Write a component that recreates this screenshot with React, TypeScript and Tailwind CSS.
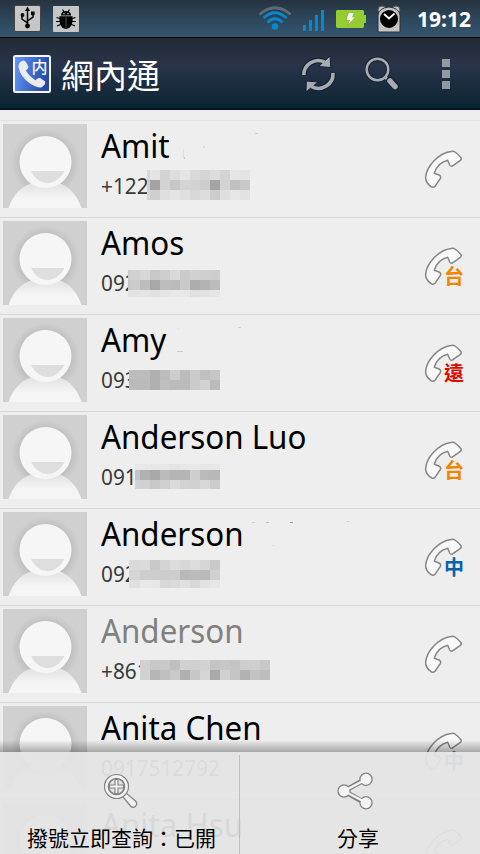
import React from 'react';

type Mosaic = { x: number; y: number; first: number; heights: number[]; cells: string[] };
type Speck = [number, number, number, number, string];
type Contact = {
  name: string;
  phone: string;
  dim?: boolean;
  badge?: string;
  badgeClass?: string;
  mosaic?: Mosaic;
  specks?: Speck[];
};

// Each pair of hex digits in a cell string is the grey of one 10px block.
const contacts: Contact[] = [
  {
    name: 'Amit', phone: '+122',
    mosaic: { x: 147, y: 49, first: 3, heights: [10, 10, 10], cells: ['d8e4d3dde5dad5dcd3e5e4', 'cfa3d3c7d4d3cda4d3c0c9', 'd6cfdfe4e0d7dccddfe6e1'] },
    specks: [[183, 28, 1, 10, '#e2e2e2'], [184, 36, 1, 2, '#ccc'], [203, 25, 2, 2, '#dedede'], [255, 12, 3, 1, '#d0d0d0']],
  },
  {
    name: 'Amos', phone: '092', badge: '台', badgeClass: 'text-[#f08600]',
    mosaic: { x: 128, y: 52, first: 2, heights: [10, 10, 7], cells: ['cdd1d7c8cdd9cbd1cfcd', 'c5cbbda8bdbbc9adb3bb', 'e2e3e5e1e5e8e7e0e2e6'] },
  },
  {
    name: 'Amy', phone: '093', badge: '遠', badgeClass: 'text-[#df0b00]',
    mosaic: { x: 129, y: 55, first: 1, heights: [10, 10], cells: ['bcbcbcb0bccdbccbc0c6', 'bababab0bfbbbbcbd2bb'] },
    specks: [[177, 36, 6, 1, '#ccc'], [238, 12, 3, 1, '#d0d0d0'], [178, 13, 1, 1, '#ddd']],
  },
  {
    name: 'Anderson Luo', phone: '091', badge: '台', badgeClass: 'text-[#f08600]',
    mosaic: { x: 135, y: 52, first: 5, heights: [6, 10, 9], cells: ['e7e8e7e7e4e7e8e6e7', 'c4b2a8bbb5b5cebab8', 'd2d1c8d0dbd3d1d8cc'] },
  },
  {
    name: 'Anderson', phone: '092', badge: '中', badgeClass: 'text-[#0763ae]',
    mosaic: { x: 129, y: 51, first: 1, heights: [10, 10, 8], cells: ['dadadbc9d4dcd8dcd6c9', 'd5d5cdcdcdcdb9bbbad0', 'e0e0e8e7d8dae0d8e2e7'] },
    specks: [[252, 13, 3, 1, '#cfcfcf'], [266, 13, 3, 1, '#c4c4c4'], [290, 13, 3, 1, '#9b9b9b'], [347, 12, 2, 1, '#ccc'], [272, 36, 2, 1, '#ddd']],
  },
  {
    name: 'Anderson', phone: '+861', dim: true,
    mosaic: { x: 140, y: 54, first: 10, heights: [10, 10], cells: ['d1c8c9bfd1d0d2c5c7c4cecfc8', 'd2b6c0c9b0c7d5a9d0c5b2c3bd'] },
  },
  { name: 'Anita Chen', phone: '0917512792', badge: '中', badgeClass: 'text-[#0763ae]' },
  { name: 'Anita Hsu', phone: '' },
];

function Avatar() {
  return (
    <svg width="84" height="84" viewBox="0 0 84 84" className="shrink-0">
      <defs>
        <radialGradient id="avatarShade" cx="0.5" cy="0.5" r="0.5">
          <stop offset="0.76" stopColor="#a8a8a8" stopOpacity="0.4" />
          <stop offset="1" stopColor="#a8a8a8" stopOpacity="0" />
        </radialGradient>
        <linearGradient id="bodyFill" x1="0" y1="0" x2="0" y2="1">
          <stop offset="0" stopColor="#e2e2e2" />
          <stop offset="0.6" stopColor="#f5f5f5" />
        </linearGradient>
      </defs>
      <rect width="84" height="84" fill="#d0d0d0" />
      <circle cx="42.5" cy="39" r="34" fill="url(#avatarShade)" />
      <path d="M5.500 84C10 71 18 62.500 28 59.500H57C66 62.500 74 71 78.500 84Z" fill="url(#bodyFill)" />
      <circle cx="42.500" cy="38" r="26" fill="#f6f6f6" />
      <path d="M28 47H61.500C57 55 51 59 45 59C38 59 32 55 28 47Z" fill="#dedede" />
    </svg>
  );
}

function Handset() {
  return (
    <svg width="40" height="40" viewBox="0 0 40 40">
      <path
        d="M1.700 28C2.500 18 14 4 27 2.400Q29.500 1.900 31 3Q34.500 5.500 37 8.800Q37.800 10.500 36 11.700L28.200 17.200Q26.500 17.500 25.700 16L23.700 11.300C17 13 12 18 10.300 24.300L15 26Q17.500 27.500 16.300 29.500L11 37.300Q9.300 39 7.500 37.800Q2.500 34.500 1.700 30Z"
        fill="#f9f9f9" stroke="#868686" strokeWidth="1.500" strokeLinejoin="round"
      />
    </svg>
  );
}

function MosaicBlock({ m }: { m: Mosaic }) {
  return (
    <div className="absolute" style={{ left: m.x, top: m.y }}>
      {m.cells.map((line, r) => (
        <div key={r} className="flex" style={{ height: m.heights[r] }}>
          {(line.match(/../g) ?? []).map((g, c) => (
            <span key={c} className="h-full" style={{ width: c === 0 ? m.first : 10, background: `#${g}${g}${g}` }} />
          ))}
        </div>
      ))}
    </div>
  );
}

function Row({ c }: { c: Contact }) {
  return (
    <li className="relative flex h-[97px] shrink-0 border-b border-[#d6d6d6] pt-[3px] pl-[3px]">
      <Avatar />
      <div className="ml-[14px] min-w-0 flex-1">
        <div className={`mt-[2px] h-10 origin-left scale-x-[0.949] whitespace-nowrap text-[33px] leading-10 ${c.dim ? 'text-[#808080]' : 'text-black'}`}>{c.name}</div>
        <div className="mt-1 h-[30px] origin-left scale-x-[0.945] whitespace-nowrap text-[22px] leading-[30px] text-[#3a3a3a]">{c.phone}</div>
      </div>
      <div className="relative mt-[25px] mr-4 h-10 w-10 shrink-0">
        <Handset />
        {c.badge && <span className={`absolute top-5 left-5 font-['Noto_Sans_CJK_TC',sans-serif] text-[20px] leading-5 font-bold ${c.badgeClass}`}>{c.badge}</span>}
      </div>
      {c.mosaic && <MosaicBlock m={c.mosaic} />}
      {c.specks?.map(([x, y, w, h, color], i) => (
        <i key={i} className="absolute" style={{ left: x, top: y, width: w, height: h, background: color }} />
      ))}
    </li>
  );
}

function StatusBar() {
  return (
    <div className="flex h-[38px] shrink-0 items-center border-b border-black bg-linear-to-b from-[#26333e] via-[#2d465b] to-[#34566f]">
      <svg width="27" height="28" viewBox="0 0 27 28" className="mt-px ml-[14px]">
        <rect x="0.500" y="0.500" width="26" height="26" rx="1.500" fill="#c6c6c6" stroke="#444" />
        <path d="M13.500 4V21M13.500 18L8 14V10M13.500 16L19 12V8" fill="none" stroke="#000" strokeWidth="1.500" />
        <path d="M13.500 1.500L16 6H11Z" />
        <circle cx="13.500" cy="21" r="2.400" />
        <circle cx="8.500" cy="10" r="1.900" />
        <rect x="17" y="6.500" width="3.600" height="3.600" />
      </svg>
      <svg width="26" height="27" viewBox="0 0 26 27" className="mt-px ml-3">
        <rect width="26" height="26" rx="0.800" fill="#c6c6c6" />
        <path d="M8 9.500Q8 5 13 5T18 9.500Z" />
        <path d="M9.500 3.500L11 6M16.500 3.500L15 6" stroke="#000" strokeWidth="1.200" />
        <path d="M6.500 10.200H19.500Q21 22 13 23Q5 22 6.500 10.200Z" />
        <path d="M13 11V22" stroke="#777" strokeWidth="0.700" />
        <path d="M7 12.500L3.500 11.500M7 15.500H3M7.500 18.500L4 20M19 12.500L22.500 11.500M19 15.500H23M18.500 18.500L22 20" stroke="#000" strokeWidth="1.200" />
        <circle cx="11" cy="7.700" r="0.800" fill="#c6c6c6" />
        <circle cx="15" cy="7.700" r="0.800" fill="#c6c6c6" />
      </svg>
      <svg width="34" height="26" viewBox="0 0 34 26" className="mt-px ml-[179px]" fill="none" strokeWidth="2.800">
        <path d="M1.500 8.500Q17 -5 32.500 8.500" stroke="#596c7b" />
        <path d="M5.500 12Q17 1.500 28.500 12M9.500 16.500Q17 9 24.500 16.500" stroke="#0788cb" />
        <circle cx="17" cy="20.500" r="3.300" fill="#0788cb" />
      </svg>
      <svg width="21" height="22" viewBox="0 0 21 22" className="mt-[3px] ml-[11px]" fill="#0788cb">
        <path d="M0 16H3V22H0ZM6 11H9V22H6ZM12 6H15V22H12ZM18 1H21V22H18Z" />
      </svg>
      <svg width="30" height="18" viewBox="0 0 30 18" className="mt-px ml-3">
        <path d="M1 0H27L28 1V5H30V13H28V17L27 18H1L0 17V1Z" fill="#94cc32" />
        <path d="M12.500 2.500H18.500L16.500 7H19.500L11.500 15.500L13.500 10.500H10Z" fill="#f4f7ee" stroke="#78a22a" strokeWidth="0.500" />
      </svg>
      <svg width="24" height="28" viewBox="0 0 24 28" className="mt-px ml-[11px]">
        <circle cx="5" cy="5" r="4" fill="#c4c4c4" stroke="#555" />
        <circle cx="19" cy="5" r="4" fill="#c4c4c4" stroke="#555" />
        <path d="M1 27V10Q2 3 12 2Q22 3 23 10V27Z" fill="#c4c4c4" stroke="#333" />
        <circle cx="12" cy="14" r="9" />
        <path d="M7 9L12 13.500L17.500 8.500" fill="none" stroke="#fff" strokeWidth="1.800" />
      </svg>
      <span className="mt-px ml-4 whitespace-nowrap font-['Noto_Sans','Open_Sans',sans-serif] text-[21px] leading-7 font-bold text-white">19:12</span>
    </div>
  );
}

function Header() {
  return (
    <header className="flex h-[72px] shrink-0 items-center border-b-2 border-[#07131a] bg-linear-to-b from-[#222b36] from-0% via-[#28344a] via-40% to-[#0a2432]">
      <svg width="40" height="40" viewBox="0 0 40 40" className="mt-[2px] ml-3">
        <defs>
          <linearGradient id="appTile" x1="0" y1="0" x2="1" y2="0.200">
            <stop offset="0" stopColor="#6699fa" />
            <stop offset="1" stopColor="#2449a6" />
          </linearGradient>
        </defs>
        <rect x="2" y="2" width="36" height="36" rx="1.500" fill="url(#appTile)" stroke="#f4f6fb" strokeWidth="2" />
        <path d="M7 9.500Q8.500 7 11.500 6.500Q14 6.500 16.500 13Q16 15 13.800 16.500Q17 22 23.500 26.200Q26 23.500 28 24L33.300 27.500Q33.500 31 29.500 33.300Q26 34.500 18 29.500Q8 22.500 6.500 13Z" fill="#ececec" />
        <text x="19.500" y="18.500" fill="#f4f6fb" fontSize="16" fontWeight="500" fontFamily="Noto Sans CJK SC, sans-serif">内</text>
      </svg>
      <h1 className="mt-[2px] ml-[9px] w-[98px] whitespace-nowrap font-['Noto_Sans_CJK_TC',sans-serif] text-[33px] leading-[48px] font-normal text-white">網內通</h1>
      <svg width="36" height="38" viewBox="0 0 36 38" className="mt-[2px] ml-[141px]">
        <path d="M3.800 20A14.500 14.500 0 0 1 24.500 7M33 18A14.500 14.500 0 0 1 11.500 31.500" fill="none" stroke="#18222e" strokeWidth="6" />
        <path d="M30 1L30.800 12.500L18.500 11.500ZM6.300 26L18 27L6 37Z" fill="#a5acb3" stroke="#18222e" strokeWidth="1" />
        <path d="M3.800 20A14.500 14.500 0 0 1 24.500 7M33 18A14.500 14.500 0 0 1 11.500 31.500" fill="none" stroke="#a5acb3" strokeWidth="3.600" />
      </svg>
      <svg width="36" height="38" viewBox="0 0 36 38" className="mt-[2px] ml-[29px]">
        <circle cx="12.500" cy="14.500" r="10.800" fill="none" stroke="#18222e" strokeWidth="4.500" />
        <path d="M20 22L24 26" stroke="#a5acb3" strokeWidth="3" />
        <path d="M25 26L30.500 31.500" stroke="#18222e" strokeWidth="8" strokeLinecap="round" />
        <path d="M25 26L30 31.500" stroke="#a5acb3" strokeWidth="5.500" strokeLinecap="round" />
        <circle cx="12.500" cy="14.500" r="10.800" fill="none" stroke="#a5acb3" strokeWidth="2.500" />
      </svg>
      <div className="mt-[2px] ml-[41px] flex flex-col gap-[3px]">
        <i className="size-2 bg-[#929ba3]" />
        <i className="size-2 bg-[#929ba3]" />
        <i className="size-2 bg-[#929ba3]" />
      </div>
    </header>
  );
}

function OptionsMenu() {
  return (
    <div className="absolute inset-x-0 bottom-0">
      <div className="h-3 bg-linear-to-b from-black/0 to-black/30" />
      <div className="flex h-[102px] bg-[#e4e4e4]/95">
        <div className="flex w-[239px] flex-col items-center pl-1">
          <svg width="36" height="36" viewBox="0 0 36 36" className="mt-[21px] mr-[2px]" stroke="#828282" strokeWidth="1.200">
            <path d="M19.500 22.500L23 20L32.500 28Q35 31 32.500 33.200Q30 35.500 27.500 33L20 24Z" fill="#f2f2f2" />
            <circle cx="13.500" cy="13.500" r="12" fill="#f4f4f4" />
            <circle cx="13.500" cy="13.500" r="8" fill="#e4e4e4" strokeWidth="1.700" />
            <path d="M12 6.500H15V12H20.500V15H15V20.500H12V15H6.500V12H12Z" fill="#f4f4f4" />
          </svg>
          <span className="mt-[14px] whitespace-nowrap font-['Noto_Sans_CJK_TC',sans-serif] text-[21px] leading-[28px] text-black">撥號立即查詢：已開</span>
        </div>
        <div className="mt-[3px] w-px bg-[#c0c0c0]" />
        <div className="flex flex-1 flex-col items-center pr-1">
          <svg width="38" height="38" viewBox="0 0 38 38" className="mt-[20px] mr-[6px]">
            <path d="M8 19L29 7.500M8 19L29 31" stroke="#828282" strokeWidth="5" />
            <g fill="#f4f4f4" stroke="#828282" strokeWidth="1.300">
              <circle cx="8" cy="19" r="6.100" />
              <circle cx="30" cy="7.300" r="6.100" />
              <circle cx="30" cy="30.700" r="6.100" />
            </g>
            <path d="M9 18.500L28 8.500M9 19.500L28 29.500" stroke="#f4f4f4" strokeWidth="2.500" />
          </svg>
          <span className="mt-[13px] font-['Noto_Sans_CJK_TC',sans-serif] text-[21px] leading-[28px] text-black">分享</span>
        </div>
      </div>
    </div>
  );
}

export default function App() {
  return (
    <div className="relative flex h-[854px] w-[480px] flex-col overflow-hidden bg-[#eee] font-['Noto_Sans','Open_Sans',sans-serif]">
      <StatusBar />
      <Header />
      <div className="h-[11px] shrink-0 border-b border-[#e2e2e2]" />
      <ul className="flex min-h-0 flex-1 flex-col overflow-hidden">
        {contacts.map((c, i) => <Row key={i} c={c} />)}
      </ul>
      <OptionsMenu />
    </div>
  );
}
